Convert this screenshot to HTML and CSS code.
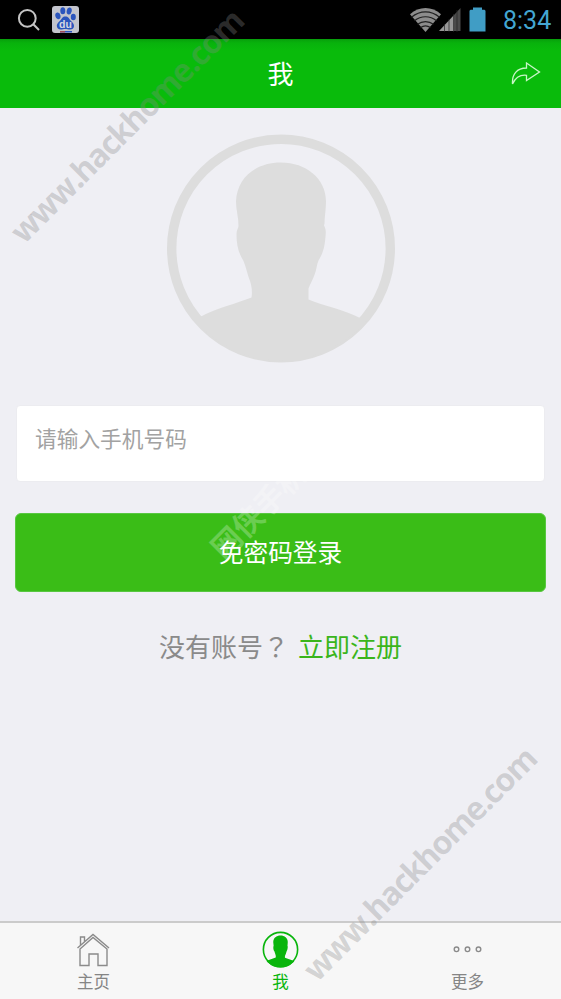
FILE: index.html
```html
<!DOCTYPE html>
<html lang="zh-CN">
<head>
<meta charset="utf-8">
<title>我</title>
<link rel="stylesheet" href="styles.css">
</head>
<body>
<div class="screen">
  <div class="status">
    <svg class="search" width="24" height="24" viewBox="0 0 24 24"><circle cx="10.3" cy="10.3" r="8.4"/><path d="M16.3 16.3 22 22"/></svg>
    <svg class="paw" width="27" height="27" viewBox="0 0 27 27">
      <rect width="27" height="27" rx="3" fill="#c3c5cd"/>
      <g fill="#2b55bd">
        <ellipse cx="5.9" cy="9.8" rx="2.6" ry="3.4" transform="rotate(-12 5.9 9.8)"/>
        <ellipse cx="10.8" cy="4.8" rx="2.5" ry="3.5"/>
        <ellipse cx="17.2" cy="5" rx="2.5" ry="3.5" transform="rotate(12 17.2 5)"/>
        <ellipse cx="21.3" cy="11" rx="2.5" ry="3.3"/>
        <path d="M13.3 10.500c3 0 3.800 2.200 5.500 4.200 1.900 1.900 3.200 3.200 3.200 5.300 0 2.400-1.800 3.500-4 3.500-2 0-2.800-.5-4.700-.5s-2.700.5-4.500.5c-2.400 0-4-1.400-4-3.700 0-2 1.400-3.400 3.200-5.100 2-2 2.500-4.200 5.300-4.200z"/>
        <rect x="8" y="25" width="12" height="1.500"/>
      </g>
      <rect x="8" y="25" width="5" height="1.500" fill="#a24a55"/>
      <text x="7" y="21.500" class="du">du</text>
    </svg>
    <span class="gap"></span>
    <svg class="wifi" width="31" height="24" viewBox="0 0 31 24">
      <path d="M0 6.200C9-2 22-2 31 6.200L15.500 24z" fill="#8c8c8c"/>
      <path d="M1.500 9.200C10 2 21 2 29.500 9.200M4.500 12.800c6.500-5.400 15.500-5.400 22 0M7.500 16.300c4.800-3.700 11.200-3.700 16 0M10.500 19.600c3-2.200 7-2.200 10 0" fill="none" stroke="#202020" stroke-width="1.200"/>
    </svg>
    <svg class="signal" width="22" height="25" viewBox="0 0 22 25">
      <path d="M0 24 15 8v16z" fill="#979797"/><path d="M15 8l6.500-7v23H15z" fill="#4a4a4a"/>
      <path d="M5.500 17v8M10 12v13M14.500 7v18M18 3v22" stroke="#222" stroke-width=".7"/>
    </svg>
    <svg class="battery" width="17" height="25" viewBox="0 0 17 25"><path d="M1.500 2.800H4V.5h9v2.300h2.500l1 1V24.500H.5V3.800z" fill="#409dc5"/></svg>
    <span class="time">8:34</span>
  </div>
  <header class="title-bar">
    <span></span><h1>我</h1>
    <svg class="share" width="30" height="23" viewBox="0 0 30 23"><path d="M15.500 1 28.500 10 15.500 18.500V13.300C9 12.600 4.500 15.500 1.500 22 .8 12 6 6.200 15.500 6z"/></svg>
  </header>
  <main>
    <svg class="avatar" width="228" height="229" viewBox="0 0 228 229">
      <defs><clipPath id="disc"><circle cx="114" cy="114.500" r="112"/></clipPath>
      <path id="person" d="M114 28.500c25 0 45 16 45 39 0 8-1.500 15-1.500 22l-.5 2c2 4 2 6 1.500 11-1 13-3 17-7 24-2 5-2 9-3.500 13-2 6-5 11-6.500 15v11c17 7 36 10 53.500 19.500L215 195v40H13v-40L33 183c17-9 35-13 51.500-19.500 1-6 0-12-1.500-16.500-2.500-6-4-15-7-21-5-8-6.500-16-6.500-26 0-4 2-6 2-8 0-9-2.500-16-2.500-24.500 1-24 20-39 45-39z"/></defs>
      <circle cx="114" cy="114.500" r="109.300" fill="none" stroke="#dddddd" stroke-width="9.400"/>
      <g clip-path="url(#disc)"><use href="#person" fill="#dddddd"/></g>
    </svg>
    <div class="phone">请输入手机号码</div>
    <div class="login">免密码登录</div>
    <p class="register">没有账号<span class="question" lang="zh-TW">？</span><a>立即注册</a></p>
  </main>
  <nav class="tabs">
    <div class="tab">
      <svg width="35" height="35" viewBox="0 0 35 35" class="line"><path d="M1.500 16 17 2.500 33 16M4 17V33.500h9V22h9v11.500h9V17L17 5.500zM4.500 13V5h4v5"/></svg>
      <span>主页</span>
    </div>
    <div class="tab active">
      <svg width="37" height="37" viewBox="0 0 228 229"><circle cx="114" cy="114.500" r="106" fill="none" stroke="#09b50c" stroke-width="10"/><g clip-path="url(#disc)"><use href="#person" fill="#09b50c"/></g></svg>
      <span>我</span>
    </div>
    <div class="tab">
      <svg width="35" height="35" viewBox="0 0 35 35" class="line"><circle cx="6.500" cy="17.300" r="2.300"/><circle cx="17.500" cy="17.300" r="2.300"/><circle cx="28.500" cy="17.300" r="2.300"/></svg>
      <span>更多</span>
    </div>
  </nav>
  <svg class="watermarks" width="561" height="999" viewBox="0 0 561 999">
    <text class="mark" transform="translate(24 245) rotate(-45)" textLength="315">www.hackhome.com</text>
    <text class="mark" transform="translate(317 983) rotate(-45)" textLength="315">www.hackhome.com</text>
    <text class="mark-cn" transform="translate(224 561) rotate(-45)">网侠手机</text>
  </svg>
</div>
</body>
</html>
```
FILE: styles.css
```css
* { box-sizing: border-box; }
body { margin: 0; font-family: "Noto Sans CJK SC", sans-serif; }
.screen { position: relative; width: 561px; height: 999px; display: flex; flex-direction: column; overflow: hidden; background: #efeff4; }
.status { height: 39px; flex: none; display: flex; align-items: center; background: #000; padding: 0 10px 0 17px; }
.search { fill: none; stroke: #c4c4c4; stroke-width: 2; }
.paw { margin-left: 11px; }
.du { font: bold 10.500px "Liberation Sans", sans-serif; fill: #d5d8e2; }
.gap { flex: 1; }
.wifi { margin-right: 1px; }
.signal { margin-left: -3px; }
.battery { margin: 0 17px 0 8px; }
.time { width: 48px; font: 25px/39px Roboto, sans-serif; color: #43a6d2; white-space: nowrap; padding-top: 1px; }
.title-bar { height: 69px; flex: none; display: grid; grid-template-columns: 1fr auto 1fr; align-items: center; padding: 0 20px; background: linear-gradient(#079f0b, #08b20c 4px, #09bb0b 12px); }
.title-bar h1 { margin: -2px 0 0; font-size: 26px; font-weight: 400; line-height: 38px; color: #fff; }
.share { justify-self: end; fill: none; stroke: #c9f5c8; stroke-width: 1.300; stroke-linejoin: miter; }
main { flex: 1; display: flex; flex-direction: column; align-items: center; padding: 26px 15px 0; }
.avatar { flex: none; }
.phone { width: 529px; height: 77px; margin-top: 42px; padding: 0 18px 12px; display: flex; align-items: center; border: 1px solid #ececf0; border-radius: 4px; background: #fff; color: #a2a2a2; font-size: 21.700px; }
.login { width: 531px; height: 79px; margin-top: 31px; display: flex; align-items: center; justify-content: center; border: 1px solid #58c741; border-radius: 6px; background: #3abd17; color: #fff; font-size: 24.700px; padding-bottom: 4px; }
.register { margin: 35px 0 0; font-size: 26px; line-height: 38px; color: #8a8a8a; }
.question { font-family: "Noto Sans CJK TC", sans-serif; }
.register a { margin-left: 9px; color: #3ab51b; }
.tabs { height: 78px; flex: none; display: grid; grid-template-columns: repeat(3, 1fr); background: #f7f7f7; border-top: 2px solid #cbcbcb; }
.tab { display: flex; flex-direction: column; align-items: center; padding-top: 8px; color: #858585; font-size: 16.500px; line-height: 27px; }
.tab svg { height: 37px; flex: none; }
.tab.active { color: #09b50c; }
.line { fill: none; stroke: #8b8b8b; stroke-width: 1.400; }
.watermarks { position: absolute; inset: 0; pointer-events: none; }
.mark { font: 700 32px "Open Sans", sans-serif; fill: #888; fill-opacity: .33; }
.mark-cn { font: 700 30px "Noto Sans CJK SC", sans-serif; fill: #fff; fill-opacity: .25; }
```
